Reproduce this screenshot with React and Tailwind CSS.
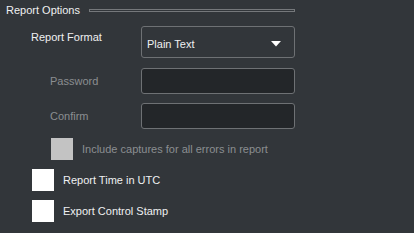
import React from "react";

const Checkbox = ({ label, disabled }) => (
  <div className="flex items-center gap-[9px]">
    <div
      className={`w-[22px] h-[22px] ${disabled ? "bg-[#c3c3c3]" : "bg-white"}`}
    />
    <span className={disabled ? "text-[#8b8e91]" : "text-[#eff0f1]"}>
      {label}
    </span>
  </div>
);

const App = () => {
  return (
    <div className="w-[414px] h-[233px] overflow-hidden bg-[#32363a] font-['Liberation_Sans',sans-serif] text-[11px] leading-[13px] text-[#eff0f1]">
      {/* header */}
      <div className="flex items-center h-[20px] pl-[6px]">
        <span className="w-[83px]">Report Options</span>
        <div className="w-[206px] h-[3px] border border-[#75787b] bg-[#32363a]" />
      </div>

      {/* format */}
      <div className="flex mt-[6px] pl-[31px]">
        <div className="w-[110px] pt-[5px]">Report Format</div>
        <div className="w-[154px] h-[32px] border border-[#6e7174] rounded-[3px] flex items-center justify-between pl-[5px] pr-[13px]">
          <span className="pt-[4px]">Plain Text</span>
          <svg width="10" height="6" viewBox="0 0 10 6" className="mt-[3px]">
            <polygon points="0,0 10,0 5,5.5" fill="#ffffff" />
          </svg>
        </div>
      </div>

      {/* password */}
      <div className="flex items-center mt-[10px] pl-[50px]">
        <div className="w-[91px] text-[#8b8e91]">Password</div>
        <div className="w-[154px] h-[26px] border border-[#6e7174] rounded-[3px] bg-[#232629]" />
      </div>
      <div className="flex items-center mt-[9px] pl-[50px]">
        <div className="w-[91px] text-[#8b8e91]">Confirm</div>
        <div className="w-[154px] h-[26px] border border-[#6e7174] rounded-[3px] bg-[#232629]" />
      </div>

      <div className="flex flex-col gap-[9px] mt-[9px]">
        <div className="pl-[51px]">
          <Checkbox label="Include captures for all errors in report" disabled />
        </div>
        <div className="pl-[32px] flex flex-col gap-[9px]">
          <Checkbox label="Report Time in UTC" />
          <Checkbox label="Export Control Stamp" />
        </div>
      </div>
    </div>
  );
};

export default App;
